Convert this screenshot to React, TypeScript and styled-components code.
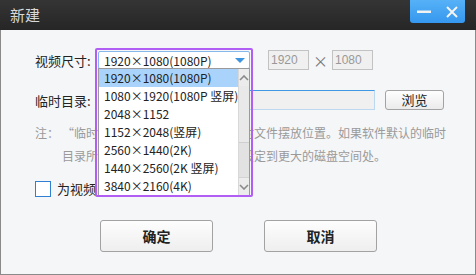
import React from "react";
import styled, { createGlobalStyle } from "styled-components";

const GlobalStyle = createGlobalStyle`
  html, body { margin: 0; padding: 0; background: #f5f6f8; }
  body {
    font-family: "Liberation Sans", "Noto Sans CJK SC", sans-serif;
    font-size: 12px;
    color: #222;
  }
`;

const Window = styled.div`
  width: 476px;
  height: 275px;
  display: flex;
  flex-direction: column;
  overflow: hidden;
`;

const TitleBar = styled.div`
  height: 30px;
  flex: none;
  background: linear-gradient(#353535, #262626);
  display: flex;
  align-items: flex-start;
  justify-content: space-between;
`;

const Title = styled.span`
  font-family: "Noto Sans CJK SC", sans-serif;
  font-size: 15px;
  color: #d8d8d8;
  line-height: 30px;
  margin-left: 10px;
`;

const WinButtons = styled.div`
  width: 55px;
  height: 23px;
  margin-right: 11px;
  border-radius: 0 0 3px 3px;
  background: linear-gradient(#56b1f7, #3597ee);
  display: flex;
  align-items: center;
  justify-content: space-around;
`;

const Body = styled.div`
  flex: 1;
  background: #f5f6f8;
  border: 1px solid #8a8a8a;
  border-top: none;
  padding: 20px 0 0 34px;
  display: flex;
  flex-direction: column;
`;

const Row = styled.div<{ $mt: number }>`
  display: flex;
  align-items: center;
  height: 20px;
  margin-top: ${(p) => p.$mt}px;
`;

const Label = styled.span`
  font-family: "Noto Sans CJK SC", sans-serif;
  font-size: 13px;
  width: 63px;
  flex: none;
`;

const ComboWrap = styled.div`
  position: relative;
  width: 152px;
  height: 18px;
  flex: none;
  z-index: 2;
`;

const Combo = styled.div`
  height: 16px;
  border: 1px solid #86b8ec;
  border-radius: 2px;
  background: #fff;
  display: flex;
  align-items: center;
  justify-content: space-between;
  padding: 0 4px 0 5px;
  font-family: "Noto Sans CJK SC", sans-serif;
  font-size: 12px;
`;

const Arrow = styled.span`
  width: 0;
  height: 0;
  border-left: 5px solid transparent;
  border-right: 5px solid transparent;
  border-top: 5px solid #3d94e0;
`;

const Highlight = styled.div`
  position: absolute;
  top: -3px;
  left: -3px;
  width: 154px;
  height: 145px;
  border: 2px solid #b15ef5;
  border-radius: 2px;
  pointer-events: none;
`;

const List = styled.div`
  position: absolute;
  top: 17px;
  left: 0;
  width: 150px;
  height: 126px;
  background: #fff;
  border: 1px solid #9a9a9a;
  display: flex;
`;

const Items = styled.div`
  flex: 1;
  display: flex;
  flex-direction: column;
`;

const Item = styled.div<{ $active?: boolean }>`
  height: 18px;
  line-height: 18px;
  padding-left: 5px;
  white-space: nowrap;
  font-family: "Noto Sans CJK SC", sans-serif;
  font-size: 12px;
  background: ${(p) => (p.$active ? "#a9d3fb" : "transparent")};
`;

const Scroll = styled.div`
  width: 16px;
  background: #e6e6e6;
  border-left: 1px solid #d8d8d8;
  display: flex;
  flex-direction: column;
`;

const ScrollBtn = styled.div`
  height: 17px;
  display: flex;
  align-items: center;
  justify-content: center;
  background: #ececec;
`;

const Thumb = styled.div`
  height: 56px;
  background: #e9e9e9;
  border-bottom: 1px solid #cfcfcf;
`;

const Track = styled.div`
  flex: 1;
  border-bottom: 1px solid #d4d4d4;
  background: #e2e2e2;
`;

const SizeBox = styled.div<{ $ml?: number }>`
  width: 37px;
  height: 18px;
  margin-left: ${(p) => p.$ml ?? 0}px;
  border: 1px solid #c2c2c2;
  background: #f0f0f0;
  color: #999;
  font-size: 12px;
  line-height: 18px;
  padding-left: 2px;
  flex: none;
`;

const Times = styled.span`
  color: #777;
  font-family: "Noto Sans CJK SC", sans-serif;
  font-size: 15px;
  width: 23px;
  text-align: center;
`;

const PathInput = styled.div`
  width: 273px;
  height: 18px;
  margin-left: 2px;
  background: #f0f0f0;
  border: 1px solid #bcd8f1;
  border-top-color: #3f98e3;
`;

const Browse = styled.button`
  width: 59px;
  height: 20px;
  margin-left: 10px;
  border: 1px solid #a3a3a3;
  border-radius: 3px;
  background: linear-gradient(#fefefe, #ebebeb);
  font-family: "Noto Sans CJK SC", sans-serif;
  font-size: 13px;
  color: #222;
  padding: 0;
  line-height: 18px;
`;

const Note = styled.div`
  display: flex;
  margin-top: 11px;
  color: #9a9a9a;
  font-family: "Noto Sans CJK SC", sans-serif;
  font-size: 12px;
  line-height: 23px;
`;

const NoteHead = styled.span`
  width: 27px;
  flex: none;
`;

const NoteText = styled.span`
  white-space: pre;
`;

const CheckRow = styled.label`
  display: flex;
  align-items: center;
  gap: 6px;
  margin-top: 13px;
  height: 17px;
  font-family: "Noto Sans CJK SC", sans-serif;
  font-size: 13px;
`;

const Box = styled.span`
  width: 14px;
  height: 14px;
  border: 1px solid #2f7fd3;
  background: #fff;
`;

const Actions = styled.div`
  display: flex;
  gap: 51px;
  margin: 23px 0 0 65px;
`;

const ActionButton = styled.button`
  width: 113px;
  height: 32px;
  border: 1px solid #a2a2a2;
  border-radius: 3px;
  background: linear-gradient(#fdfdfd, #eeeeee);
  font-family: "Noto Sans CJK SC", sans-serif;
  font-weight: 700;
  font-size: 14px;
  color: #222;
  padding: 0;
`;

const sizes = [
  "1920×1080(1080P)",
  "1080×1920(1080P 竖屏)",
  "2048×1152",
  "1152×2048(竖屏)",
  "2560×1440(2K)",
  "1440×2560(2K 竖屏)",
  "3840×2160(4K)",
];

const Chevron = ({ up }: { up?: boolean }) => (
  <svg width="10" height="6" viewBox="0 0 10 6">
    <path
      d={up ? "M1 5 L5 1 L9 5" : "M1 1 L5 5 L9 1"}
      fill="none"
      stroke="#8a8a8a"
      strokeWidth="1.6"
    />
  </svg>
);

export default function App() {
  return (
    <Window>
      <GlobalStyle />
      <TitleBar>
        <Title>新建</Title>
        <WinButtons>
          <svg width="14" height="4" viewBox="0 0 14 4">
            <rect x="0" y="0.5" width="14" height="2.5" fill="#f2f2f2" />
          </svg>
          <svg width="12" height="12" viewBox="0 0 12 12">
            <path d="M1 1 L11 11 M11 1 L1 11" stroke="#f4f4f4" strokeWidth="2" />
          </svg>
        </WinButtons>
      </TitleBar>
      <Body>
        <Row $mt={0}>
          <Label>视频尺寸:</Label>
          <ComboWrap>
            <Combo>
              <span>{sizes[0]}</span>
              <Arrow />
            </Combo>
            <List>
              <Items>
                {sizes.map((s, i) => (
                  <Item key={s} $active={i === 0}>
                    {s}
                  </Item>
                ))}
              </Items>
              <Scroll>
                <ScrollBtn>
                  <Chevron up />
                </ScrollBtn>
                <Thumb />
                <Track />
                <ScrollBtn>
                  <Chevron />
                </ScrollBtn>
              </Scroll>
            </List>
            <Highlight />
          </ComboWrap>
          <SizeBox $ml={18}>1920</SizeBox>
          <Times>×</Times>
          <SizeBox>1080</SizeBox>
        </Row>
        <Row $mt={20}>
          <Label>临时目录:</Label>
          <PathInput />
          <Browse>浏览</Browse>
        </Row>
        <Note>
          <NoteHead>注：</NoteHead>
          <NoteText>
            {"“临时目录”是指制作中产生的临时文件摆放位置。如果软件默认的临时\n目录所在的磁盘空间不足，请将其设定到更大的磁盘空间处。"}
          </NoteText>
        </Note>
        <CheckRow>
          <Box />
          为视频自动添加字幕
        </CheckRow>
        <Actions>
          <ActionButton>确定</ActionButton>
          <ActionButton>取消</ActionButton>
        </Actions>
      </Body>
    </Window>
  );
}
